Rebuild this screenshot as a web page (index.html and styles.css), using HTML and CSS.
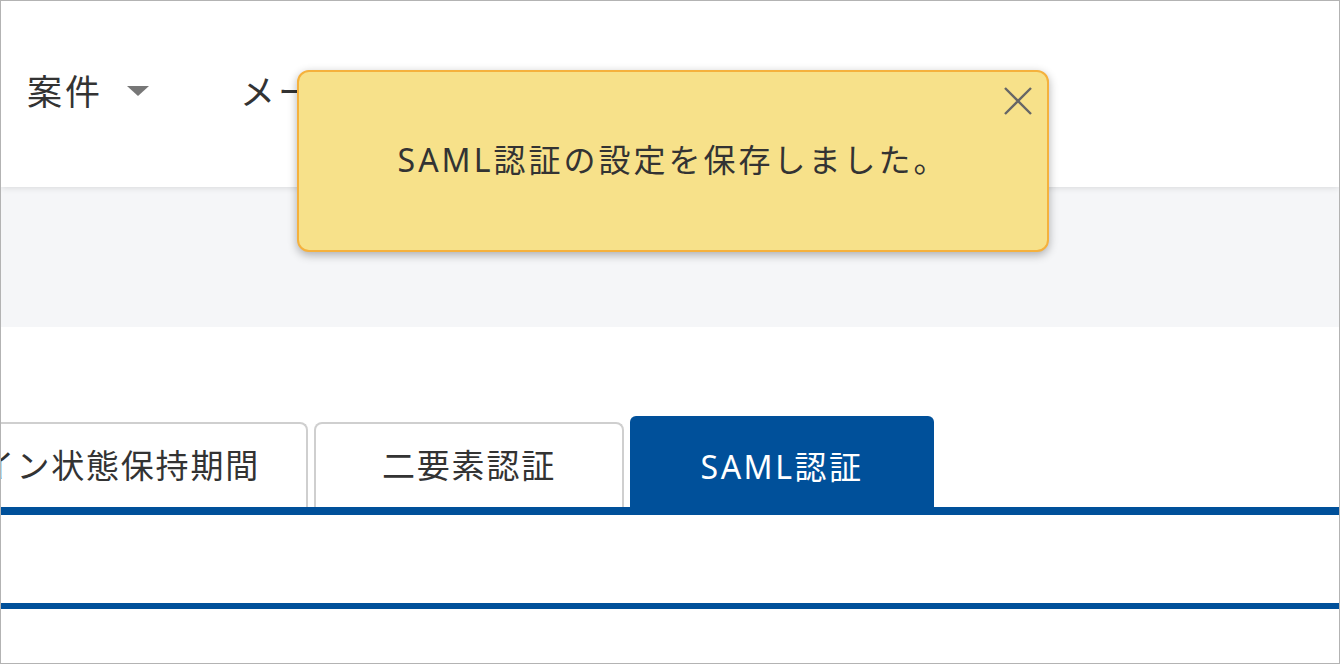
FILE: index.html
```html
<!DOCTYPE html>
<html lang="ja">
<head>
  <meta charset="UTF-8">
  <meta name="viewport" content="width=device-width, initial-scale=1.0">
  <title>SAML認証</title>
  <link rel="stylesheet" href="styles.css">
</head>
<body>
  <div class="frame">
    <header class="global-nav">
      <nav class="menu">
        <a class="menu-item">案件<span class="caret"></span></a>
        <a class="menu-item">メール<span class="caret"></span></a>
      </nav>
    </header>

    <div class="page-head"></div>

    <main class="content">
      <ul class="tabs">
        <li class="tab">ログイン状態保持期間</li>
        <li class="tab">二要素認証</li>
        <li class="tab is-active">SAML認証</li>
      </ul>
      <div class="tab-panel"></div>
    </main>

    <div class="toast">
      <p class="toast-message">SAML認証の設定を保存しました。</p>
      <button class="toast-close" aria-label="閉じる">
        <svg viewBox="0 0 28 28" width="28" height="28">
          <path d="M1 1 L27 27 M27 1 L1 27" stroke="#666" stroke-width="2.4" fill="none"/>
        </svg>
      </button>
    </div>
  </div>
</body>
</html>
```

FILE: styles.css
```css
* {
  box-sizing: border-box;
}
body {
  margin: 0;
  font-family: "Noto Sans", "Noto Sans CJK JP", sans-serif;
  color: #333;
  background: #fff;
}
.frame {
  position: relative;
  width: 1340px;
  height: 664px;
  border: 1px solid #b3b3b3;
  overflow: hidden;
}
.global-nav {
  position: relative;
  z-index: 2;
  height: 186px;
  background: #fff;
  box-shadow: 0 1px 6px rgba(0, 0, 0, 0.12);
}
.menu {
  display: flex;
  align-items: center;
  height: 100%;
  padding-left: 26px;
  gap: 91px;
}
.menu-item {
  display: flex;
  align-items: center;
  font-size: 35px;
  letter-spacing: 3px;
  color: #333;
  line-height: 1;
  padding-bottom: 6px;
}
.caret {
  width: 0;
  height: 0;
  margin-left: 24px;
  border-left: 11px solid transparent;
  border-right: 11px solid transparent;
  border-top: 10px solid #777;
}
.page-head {
  height: 140px;
  background: #f5f6f8;
}
.content {
  padding-top: 89px;
}
.tabs {
  display: flex;
  align-items: flex-end;
  gap: 6px;
  list-style: none;
  margin: 0 0 0 -137px;
  padding: 0;
}
.tab {
  min-width: 310px;
  height: 85px;
  padding: 0 46px 4px;
  display: flex;
  align-items: center;
  justify-content: center;
  border: 2px solid #cfcfcf;
  border-bottom: none;
  border-radius: 8px 8px 0 0;
  font-size: 33px;
  letter-spacing: 1.8px;
  white-space: nowrap;
  color: #333;
}
.tab.is-active {
  min-width: 304px;
  height: 91px;
  padding: 6px 46px 0;
  border: none;
  border-radius: 6px 6px 0 0;
  background: #00509a;
  color: #fff;
  font-size: 32px;
  letter-spacing: 2.5px;
}
.tab-panel {
  height: 102px;
  border-top: 8px solid #00509a;
  border-bottom: 6px solid #00509a;
}
.toast {
  position: absolute;
  z-index: 5;
  top: 69px;
  left: 296px;
  width: 752px;
  height: 182px;
  display: flex;
  align-items: center;
  justify-content: center;
  padding: 0 0 6px 0;
  background: #f7e18a;
  border: 2px solid #f5b13d;
  border-radius: 12px;
  box-shadow: 0 3px 10px rgba(0, 0, 0, 0.3);
}
.toast-message {
  margin: 0;
  font-size: 32px;
  letter-spacing: 3px;
  color: #333;
}
.toast-close {
  position: absolute;
  top: 15px;
  right: 15px;
  padding: 0;
  border: none;
  background: none;
  line-height: 0;
  cursor: pointer;
}
```
